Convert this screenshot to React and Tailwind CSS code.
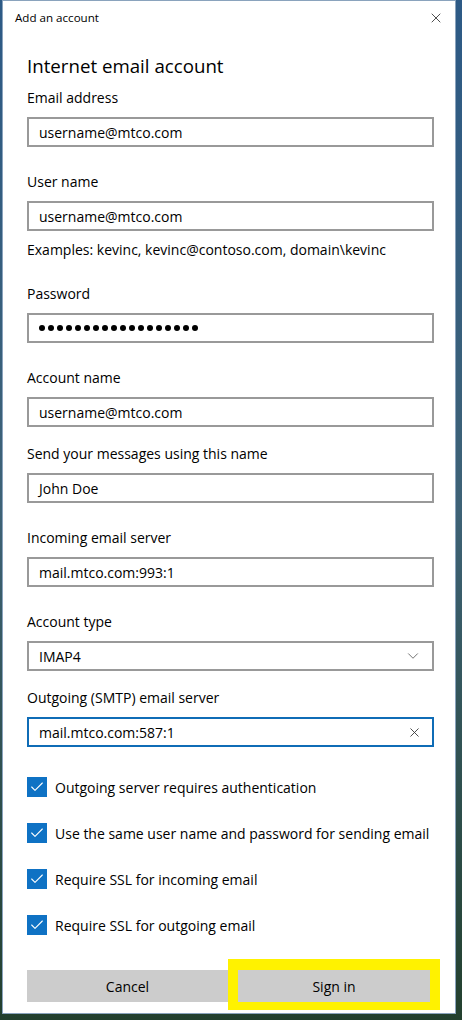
import { X, ChevronDown, Check } from 'lucide-react';

function Field({ label, children, className = 'mt-[25px]' }) {
  return (
    <div className={className}>
      <div className="h-[20px] leading-[20px] text-[14px]">{label}</div>
      <div className="mt-[9px]">{children}</div>
    </div>
  );
}

function TextBox({ value, focused }) {
  return (
    <div
      className={`h-[30px] w-[407px] border-2 flex items-center px-[10px] text-[14px] ${
        focused ? 'border-[#0f6cb6]' : 'border-[#999999]'
      }`}
    >
      <span className="flex-1">{value}</span>
      {focused && <X className="w-[15px] h-[15px] text-[#333]" strokeWidth={1.4} />}
    </div>
  );
}

function CheckRow({ label, first }) {
  return (
    <div className={`flex items-center h-[20px] ${first ? 'mt-[30px]' : 'mt-[26px]'}`}>
      <div className="w-[20px] h-[20px] bg-[#0f72c4] flex items-center justify-center">
        <Check className="w-[16px] h-[16px] text-white" strokeWidth={1.6} />
      </div>
      <span className="ml-[8px] text-[14px]">{label}</span>
    </div>
  );
}

export default function App() {
  return (
    <div className="w-[462px] h-[1020px] bg-gradient-to-b from-[#2d5a86] via-[#3e6276] to-[#23402e] overflow-hidden" style={{ fontFamily: '"Open Sans", "Noto Sans", sans-serif' }}>
      <div className="ml-[2px] w-[454px] h-[1014px] bg-white border border-[#8aa3bd] text-black">
        <div className="h-[33px] flex items-center justify-between pl-[12px] pr-[11px]">
          <span className="text-[11.6px]">Add an account</span>
          <X className="w-[16px] h-[16px] text-[#222]" strokeWidth={1.2} />
        </div>
        <div className="pl-[24px]">
          <h1 className="mt-[18px] text-[18.7px] leading-[28px]">Internet email account</h1>

          <Field label="Email address" className="mt-[8px]">
            <TextBox value="username@mtco.com" />
          </Field>

          <Field label="User name">
            <TextBox value="username@mtco.com" />
          </Field>
          <div className="mt-[9px] h-[20px] leading-[20px] text-[14px]">
            Examples: kevinc, kevinc@contoso.com, domain\kevinc
          </div>

          <Field label="Password" className="mt-[24px]">
            <TextBox
              value={
                <span className="flex gap-[3px]">
                  {Array.from({ length: 18 }).map((_, i) => (
                    <span key={i} className="w-[6px] h-[6px] rounded-full bg-black" />
                  ))}
                </span>
              }
            />
          </Field>

          <Field label="Account name">
            <TextBox value="username@mtco.com" />
          </Field>

          <Field label="Send your messages using this name" className="mt-[17px]">
            <TextBox value="John Doe" />
          </Field>

          <Field label="Incoming email server">
            <TextBox value="mail.mtco.com:993:1" />
          </Field>

          <Field label="Account type">
            <div className="h-[30px] w-[407px] border-2 border-[#999999] flex items-center px-[10px] text-[14px]">
              <span className="flex-1">IMAP4</span>
              <ChevronDown className="w-[18px] h-[18px] text-[#555]" strokeWidth={1.1} />
            </div>
          </Field>

          <Field label="Outgoing (SMTP) email server" className="mt-[17px]">
            <TextBox value="mail.mtco.com:587:1" focused />
          </Field>

          <CheckRow label="Outgoing server requires authentication" first />
          <CheckRow label="Use the same user name and password for sending email" />
          <CheckRow label="Require SSL for incoming email" />
          <CheckRow label="Require SSL for outgoing email" />

          <div className="mt-[35px] flex items-start">
            <button className="w-[201px] h-[32px] bg-[#cccccc] text-[14px]">Cancel</button>
            <div className="border-x-[10px] border-t-[11px] border-b-[8px] border-[#fff200] -mt-[11px] -mb-[8px]">
              <button className="w-[192px] h-[32px] bg-[#cccccc] text-[14px] block">Sign in</button>
            </div>
          </div>
        </div>
      </div>
    </div>
  );
}
